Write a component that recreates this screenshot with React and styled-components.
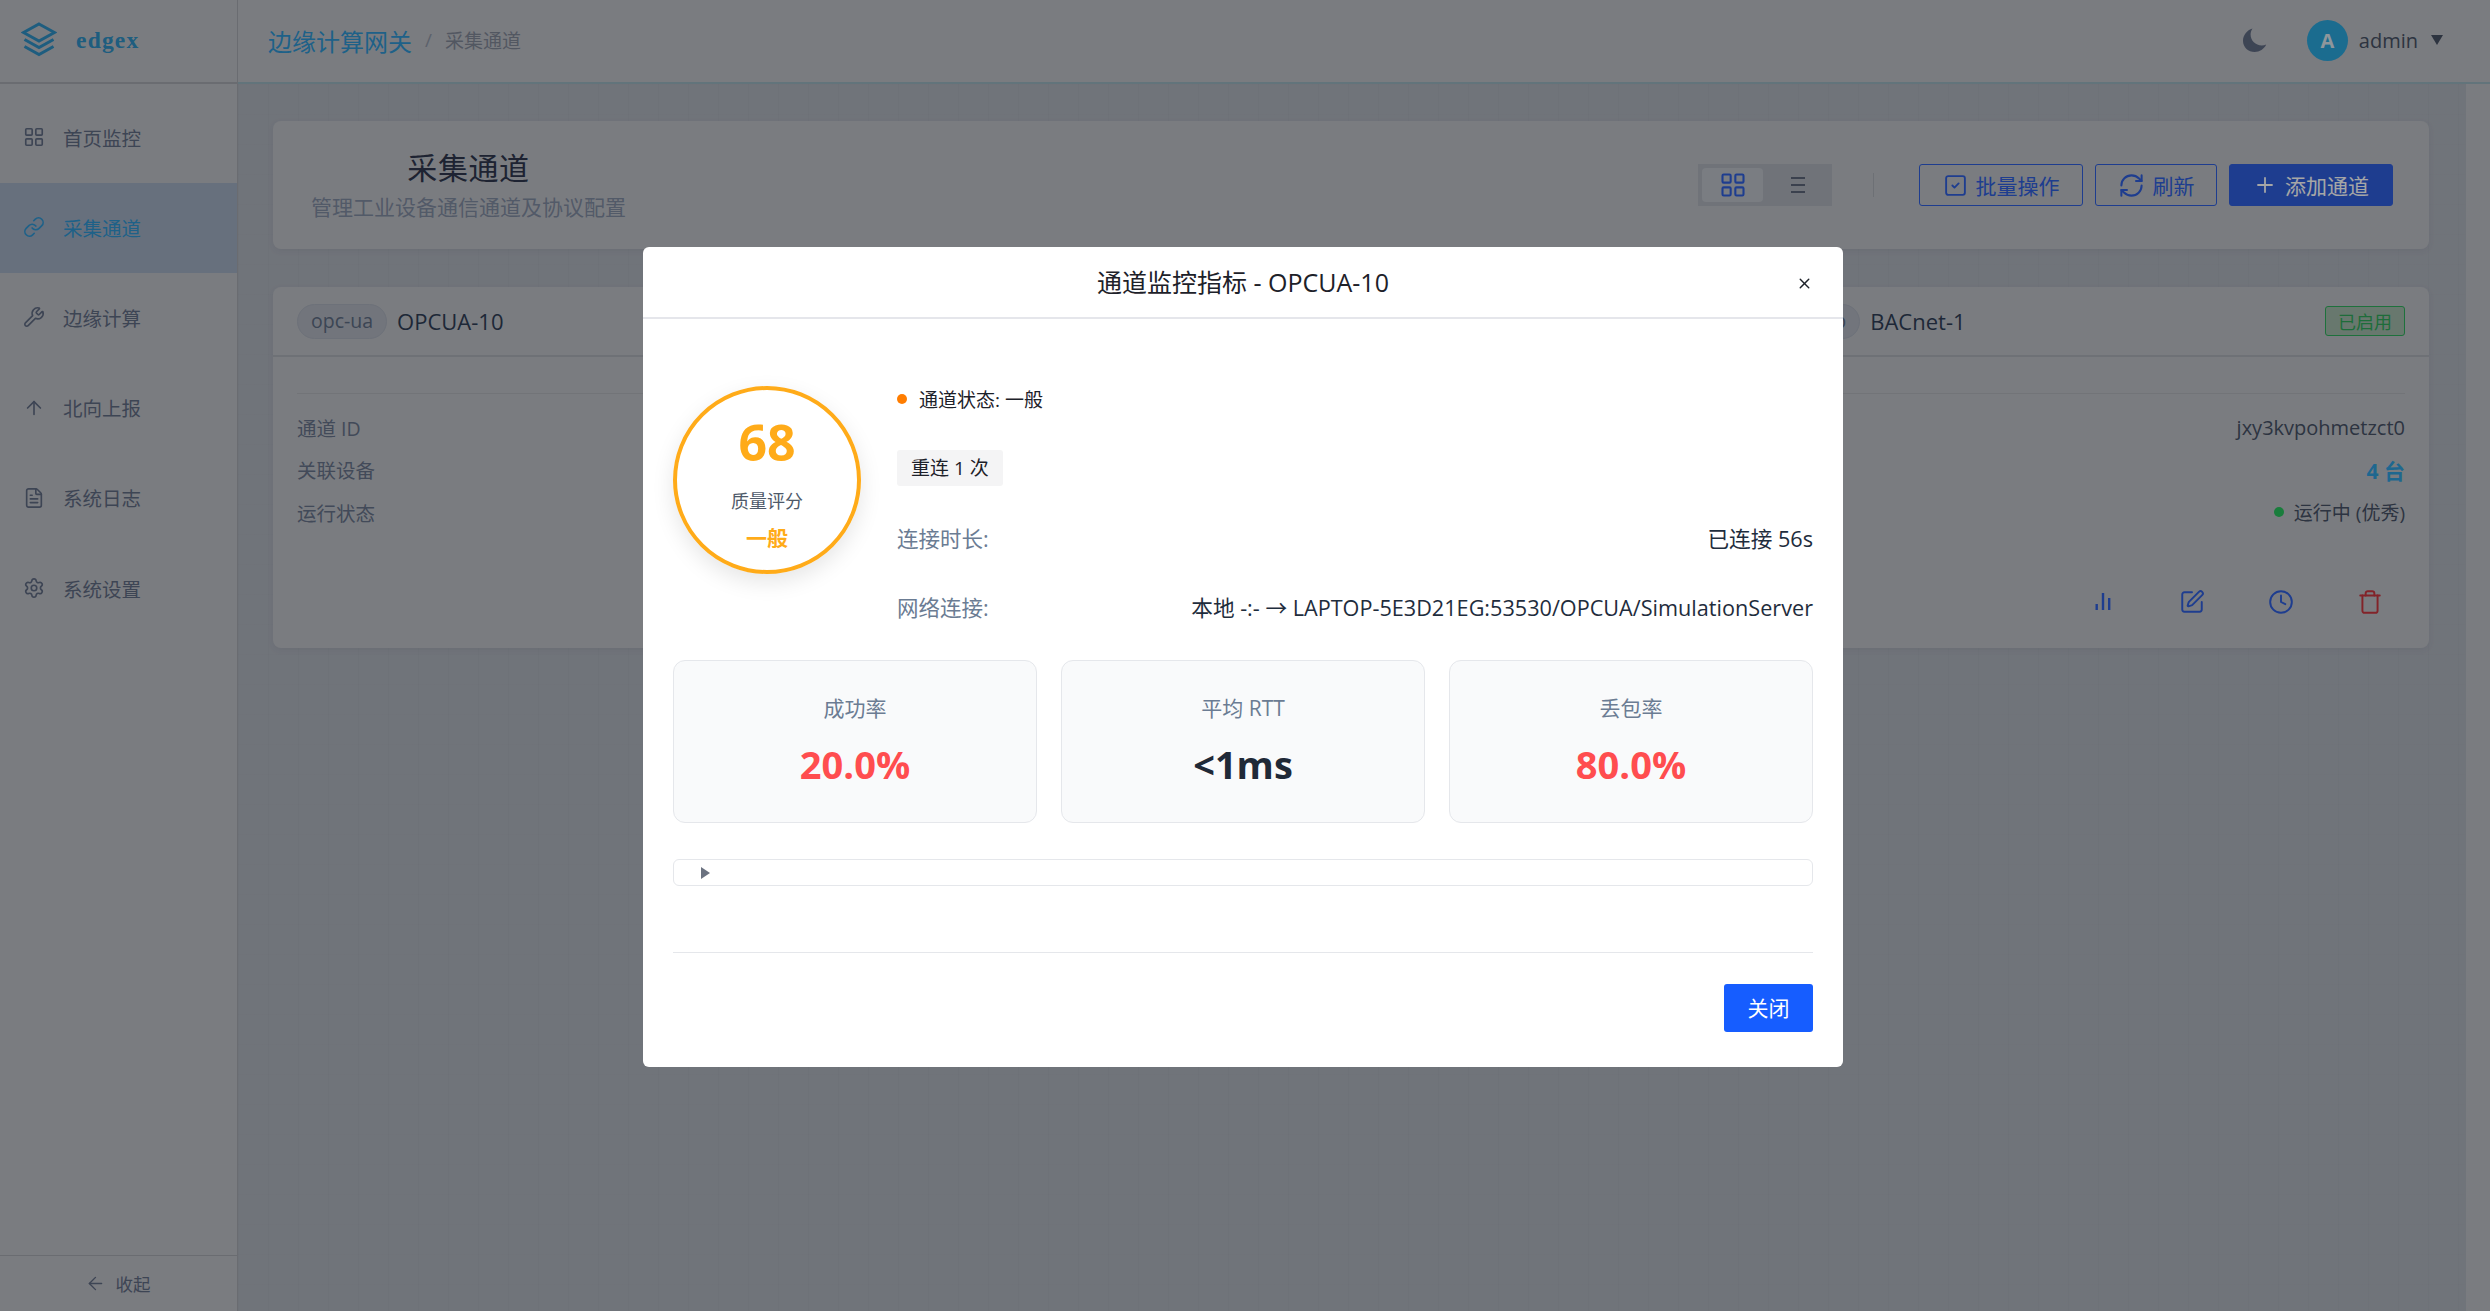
import React from 'react';
import styled, { createGlobalStyle } from 'styled-components';
import {
  ArrowLeft,
  ArrowUp,
  Clock,
  FileText,
  LayoutGrid,
  Link,
  Plus,
  RefreshCw,
  Settings,
  SquareCheck,
  SquarePen,
  Trash,
  Wrench,
  X,
} from 'lucide-react';

const SANS = '"Open Sans", "Noto Sans CJK SC", sans-serif';

const GlobalStyle = createGlobalStyle`
  html, body, #root {
    height: 100%;
    margin: 0;
  }

  body {
    overflow: hidden;
    font-family: ${SANS};
    background: #bcbfc5;
  }

  * {
    box-sizing: border-box;
  }
`;

const Shell = styled.div`
  display: flex;
  height: 100vh;
`;

const Sidebar = styled.aside`
  display: flex;
  flex-direction: column;
  flex: none;
  width: 238px;
  background: #bcbfc5;
  border-right: 1px solid #a4a7ae;
`;

const Brand = styled.div`
  display: flex;
  align-items: center;
  gap: 19px;
  flex: none;
  height: 84px;
  padding: 0 0 2px 21px;
  border-bottom: 2px solid #a4a7ae;
`;

const BrandName = styled.span`
  font-family: "Liberation Serif", serif;
  font-size: 23.5px;
  font-weight: 700;
  letter-spacing: 1.2px;
  color: #2e8fc4;
`;

const Nav = styled.nav`
  display: flex;
  flex-direction: column;
  padding-top: 9px;
`;

const NavItem = styled.div`
  display: flex;
  align-items: center;
  gap: 18px;
  height: 90.2px;
  padding: 0 0 2px 23px;
  font-size: 19.5px;
  color: ${({ $active }) => ($active ? '#2f95d2' : '#5f6a82')};
  background: ${({ $active }) => ($active ? '#9eadc0' : 'transparent')};
`;

const Collapse = styled.div`
  display: flex;
  align-items: center;
  justify-content: center;
  gap: 10px;
  height: 56px;
  margin-top: auto;
  padding-right: 2px;
  font-size: 17.5px;
  color: #5f6a82;
  border-top: 1px solid #a4a7ae;
`;

const Main = styled.main`
  display: flex;
  flex-direction: column;
  flex: 1;
  min-width: 0;
`;

const TopBar = styled.header`
  display: flex;
  align-items: center;
  justify-content: space-between;
  flex: none;
  height: 84px;
  padding: 0 47px 2px 30px;
  background: #bcbfc5;
  border-bottom: 2px solid #97b3bd;
`;

const Breadcrumb = styled.div`
  display: flex;
  align-items: center;
  font-size: 24px;
  color: #2f95d2;
`;

const Slash = styled.span`
  margin: 0 13px;
  font-size: 19px;
  color: #8e96a6;
`;

const CrumbCurrent = styled.span`
  font-size: 19px;
  color: #7f8696;
`;

const UserArea = styled.div`
  display: flex;
  align-items: center;
`;

const Avatar = styled.div`
  display: flex;
  align-items: center;
  justify-content: center;
  width: 41px;
  height: 41px;
  margin: 0 11px 0 40px;
  font-size: 20px;
  font-weight: 700;
  color: #dce7ef;
  background: #2aa6dc;
  border-radius: 50%;
`;

const UserName = styled.span`
  font-size: 20px;
  color: #465063;
`;

const Caret = styled.span`
  width: 0;
  height: 0;
  margin-left: 13px;
  border-left: 6.5px solid transparent;
  border-right: 6.5px solid transparent;
  border-top: 10px solid #465063;
`;

const Body = styled.div`
  display: flex;
  flex: 1;
  min-height: 0;
`;

const Content = styled.div`
  flex: 1;
  min-width: 0;
  padding: 37px 37px 0 35px;
  background-color: #adb2bc;
  background-image:
    linear-gradient(to right, rgba(90, 100, 120, 0.035) 1px, transparent 1px),
    linear-gradient(to bottom, rgba(90, 100, 120, 0.02) 1px, transparent 1px);
  background-size: 30px 30px;
`;

const ScrollTrack = styled.div`
  flex: none;
  width: 24px;
  background: #bcbfc5;
`;

const PageHeader = styled.section`
  display: flex;
  align-items: center;
  justify-content: space-between;
  height: 128px;
  padding: 0 36px 0 38px;
  background: #bcbfc5;
  border-radius: 8px;
  box-shadow: 0 2px 6px rgba(60, 70, 90, 0.08);
`;

const TitleBlock = styled.div`
  padding-bottom: 2px;
  text-align: center;
`;

const PageTitle = styled.h1`
  margin: 0 0 1px;
  font-size: 30px;
  font-weight: 400;
  line-height: 44px;
  letter-spacing: 0.6px;
  color: #2e364d;
`;

const PageSubtitle = styled.p`
  margin: 0;
  font-size: 21px;
  line-height: 32px;
  color: #7f8aa0;
`;

const Toolbar = styled.div`
  display: flex;
  align-items: center;
  gap: 12px;
`;

const ViewToggle = styled.div`
  display: flex;
  align-items: center;
  gap: 4px;
  width: 134px;
  height: 42px;
  padding: 0 4px;
  background: #acb1bb;
`;

const ViewOption = styled.div`
  display: flex;
  align-items: center;
  justify-content: center;
  width: 61px;
  height: 34px;
  color: ${({ $active }) => ($active ? '#2f5fdc' : '#5b6579')};
  background: ${({ $active }) => ($active ? '#bcc0c8' : 'transparent')};
  border-radius: 4px;
`;

const ToolbarDivider = styled.div`
  width: 1px;
  height: 24px;
  margin: 0 33px 0 29px;
  background: #a8acb4;
`;

const ActionButton = styled.button`
  display: inline-flex;
  align-items: center;
  justify-content: center;
  gap: 8px;
  height: 42px;
  padding: 0;
  width: ${({ $width }) => $width}px;
  font-family: ${SANS};
  font-size: 21px;
  color: ${({ $primary }) => ($primary ? '#ffffff' : '#2f5fdc')};
  background: ${({ $primary }) => ($primary ? '#2f5fdc' : 'transparent')};
  border: 1px solid #2f5fdc;
  border-radius: 3px;
`;

const CardGrid = styled.section`
  display: grid;
  grid-template-columns: repeat(3, 1fr);
  gap: 36px;
  margin-top: 38px;
`;

const Card = styled.article`
  height: 361px;
  background: #bcbfc5;
  border-radius: 8px;
  box-shadow: 0 2px 6px rgba(60, 70, 90, 0.08);
`;

const CardHeader = styled.div`
  display: flex;
  align-items: center;
  height: 70px;
  padding: 0 24px;
  border-bottom: 2px solid #a9aeb5;
`;

const TypeChip = styled.span`
  display: flex;
  align-items: center;
  height: 35px;
  padding: 0 13px 1px;
  font-size: 19.5px;
  color: #5c6b82;
  background: #afb4bf;
  border: 1px solid #a8aebb;
  border-radius: 18px;
`;

const CardName = styled.span`
  margin-left: 10px;
  font-size: 22px;
  color: #2e3d55;
`;

const EnabledTag = styled.span`
  display: flex;
  align-items: center;
  height: 30px;
  margin-left: auto;
  padding: 0 12px;
  font-size: 18px;
  color: #2fa85a;
  background: #a0b8aa;
  border: 1px solid #2fae5c;
  border-radius: 3px;
`;

const CardBody = styled.div`
  padding: 36px 24px 0;
`;

const InfoList = styled.div`
  padding-top: 12px;
  border-top: 1px solid #b0b3b9;
`;

const InfoRow = styled.div`
  display: flex;
  align-items: center;
  justify-content: space-between;
  height: 42.5px;
  font-size: 19.5px;
`;

const InfoLabel = styled.span`
  color: #667289;
`;

const InfoValue = styled.span`
  font-size: 20px;
  color: #455064;
`;

const DeviceCount = styled.span`
  font-size: 21px;
  font-weight: 700;
  color: #2f9fdc;
`;

const StatusValue = styled.span`
  display: flex;
  align-items: center;
  gap: 10px;
  font-size: 19px;
  color: #455064;
`;

const Dot = styled.span`
  width: ${({ $size }) => $size}px;
  height: ${({ $size }) => $size}px;
  background: ${({ $color }) => $color};
  border-radius: 50%;
`;

const CardActions = styled.div`
  display: flex;
  justify-content: flex-end;
  margin: 46px -9px 0 0;
`;

const IconAction = styled.span`
  display: flex;
  align-items: center;
  justify-content: center;
  width: 89px;
  height: 44px;
  color: ${({ $danger }) => ($danger ? '#c8363f' : '#2f5fdc')};
`;

const Backdrop = styled.div`
  position: fixed;
  inset: 0;
  display: flex;
  align-items: flex-start;
  justify-content: center;
  padding: 247px 4px 0 0;
  background: rgba(0, 0, 0, 0.35);
`;

const Modal = styled.div`
  display: flex;
  flex-direction: column;
  width: 1200px;
  height: 820px;
  background: #ffffff;
  border-radius: 6px;
`;

const ModalHeader = styled.div`
  position: relative;
  display: flex;
  align-items: center;
  justify-content: center;
  flex: none;
  height: 72px;
  padding-bottom: 2px;
  font-size: 25px;
  color: #1d2129;
  border-bottom: 2px solid #e5e6eb;
`;

const CloseIcon = styled(X)`
  position: absolute;
  top: 28px;
  right: 30px;
  color: #1d2129;
`;

const ModalBody = styled.div`
  display: flex;
  flex-direction: column;
  padding: 67px 30px 0;
`;

const Overview = styled.div`
  display: flex;
  gap: 36px;
`;

const ScoreRing = styled.div`
  display: flex;
  flex-direction: column;
  align-items: center;
  flex: none;
  width: 188px;
  height: 188px;
  padding-top: 22px;
  border: 4.5px solid #ffab19;
  border-radius: 50%;
  box-shadow: 0 8px 22px rgba(0, 0, 0, 0.1);
`;

const ScoreNumber = styled.div`
  font-size: 50px;
  font-weight: 700;
  line-height: 60px;
  color: #ffab19;
`;

const ScoreLabel = styled.div`
  margin-top: 16px;
  font-size: 18px;
  line-height: 26px;
  color: #4e5969;
`;

const ScoreGrade = styled.div`
  margin-top: 9px;
  font-size: 21px;
  font-weight: 700;
  line-height: 30px;
  color: #ffab19;
`;

const Details = styled.div`
  display: flex;
  flex-direction: column;
  align-items: flex-start;
  flex: 1;
  min-width: 0;
`;

const StatusLine = styled.div`
  display: flex;
  align-items: center;
  gap: 12px;
  height: 30px;
  padding-bottom: 4px;
  font-size: 19px;
  color: #1d2129;
`;

const ReconnectTag = styled.div`
  display: flex;
  align-items: center;
  height: 36px;
  margin-top: 34px;
  padding: 0 14px 2px;
  font-size: 19px;
  color: #1d2129;
  background: #f4f4f5;
  border-radius: 3px;
`;

const DetailRow = styled.div`
  display: flex;
  align-items: center;
  justify-content: space-between;
  align-self: stretch;
  height: 30px;
  margin-top: ${({ $mt }) => $mt}px;
  font-size: 21px;
`;

const DetailLabel = styled.span`
  font-size: 21.5px;
  color: #6b7c93;
`;

const DetailValue = styled.span`
  font-size: 21.65px;
  color: #1f2d3d;
`;

const Arrow = styled.span`
  font-family: "Noto Sans CJK SC", sans-serif;
`;

const Stats = styled.div`
  display: grid;
  grid-template-columns: repeat(3, 1fr);
  gap: 24px;
  margin-top: 39px;
`;

const StatCard = styled.div`
  display: flex;
  flex-direction: column;
  align-items: center;
  justify-content: center;
  gap: 16px;
  height: 163px;
  padding-bottom: 2px;
  background: #f9fafb;
  border: 1.5px solid #e5e7eb;
  border-radius: 12px;
`;

const StatLabel = styled.div`
  font-size: 21px;
  line-height: 30px;
  color: #6b7c93;
`;

const StatValue = styled.div`
  font-size: 38px;
  font-weight: 700;
  line-height: 50px;
  color: ${({ $alert }) => ($alert ? '#ff4d4f' : '#1f2937')};
`;

const Disclosure = styled.div`
  display: flex;
  align-items: center;
  height: 27px;
  margin-top: 36px;
  padding-left: 27px;
  border: 1.5px solid #e5e7eb;
  border-radius: 6px;
`;

const Triangle = styled.span`
  width: 0;
  height: 0;
  border-top: 6px solid transparent;
  border-bottom: 6px solid transparent;
  border-left: 9px solid #6b7280;
`;

const ModalFooter = styled.div`
  display: flex;
  justify-content: flex-end;
  margin-top: 66px;
  padding-top: 31px;
  border-top: 1.5px solid #e5e7eb;
`;

const CloseButton = styled.button`
  width: 89px;
  height: 48px;
  padding: 0 0 2px;
  font-family: ${SANS};
  font-size: 21px;
  color: #ffffff;
  background: #165dff;
  border: 0;
  border-radius: 3px;
`;

const LogoMark = () => (
  <svg width="36" height="36" viewBox="0 0 36 36" fill="none" stroke="#2e8fc4" strokeWidth="3">
    <path d="M18 2 33.5 10.5 18 19 2.5 10.5Z" />
    <path d="M3.5 17.5 18 25.5 32.5 17.5" />
    <path d="M3.5 24.5 18 32.5 32.5 24.5" />
  </svg>
);

const MoonIcon = () => (
  <svg width="24" height="24" viewBox="0 0 24 24" fill="#5f6a82">
    <path d="M9.5 0.5C3.9 2.2 0 7.2 0 12.8 0 19.6 5.4 24 11.6 24c5 0 9.6-2.8 11.6-7.4-1.4.6-2.9.9-4.4.9C12.6 17.5 7.6 12.8 7.6 6.6c0-2.2.6-4.3 1.9-6.1Z" />
  </svg>
);

const ListIcon = () => (
  <svg width="14" height="16" viewBox="0 0 14 16" fill="none" stroke="currentColor" strokeWidth="2">
    <path d="M0 1h14M0 8h14M0 15h14" />
  </svg>
);

const BarsIcon = () => (
  <svg width="16" height="17" viewBox="0 0 16 17" fill="currentColor">
    <rect x="0.5" y="11" width="2.4" height="6" />
    <rect x="6.8" y="0" width="2.4" height="17" />
    <rect x="13" y="5" width="2.4" height="12" />
  </svg>
);

const navItems = [
  { label: '首页监控', icon: LayoutGrid },
  { label: '采集通道', icon: Link, active: true },
  { label: '边缘计算', icon: Wrench },
  { label: '北向上报', icon: ArrowUp },
  { label: '系统日志', icon: FileText },
  { label: '系统设置', icon: Settings },
];

const stats = [
  { label: '成功率', value: '20.0%', alert: true },
  { label: '平均 RTT', value: '<1ms' },
  { label: '丢包率', value: '80.0%', alert: true },
];

const App = () => (
  <>
    <GlobalStyle />
    <Shell>
      <Sidebar>
        <Brand>
          <LogoMark />
          <BrandName>edgex</BrandName>
        </Brand>
        <Nav>
          {navItems.map(({ label, icon: Icon, active }) => (
            <NavItem key={label} $active={active}>
              <Icon size={22} strokeWidth={1.8} />
              {label}
            </NavItem>
          ))}
        </Nav>
        <Collapse>
          <ArrowLeft size={21} strokeWidth={1.6} />
          收起
        </Collapse>
      </Sidebar>
      <Main>
        <TopBar>
          <Breadcrumb>
            边缘计算网关
            <Slash>/</Slash>
            <CrumbCurrent>采集通道</CrumbCurrent>
          </Breadcrumb>
          <UserArea>
            <MoonIcon />
            <Avatar>A</Avatar>
            <UserName>admin</UserName>
            <Caret />
          </UserArea>
        </TopBar>
        <Body>
          <Content>
            <PageHeader>
              <TitleBlock>
                <PageTitle>采集通道</PageTitle>
                <PageSubtitle>管理工业设备通信通道及协议配置</PageSubtitle>
              </TitleBlock>
              <Toolbar>
                <ViewToggle>
                  <ViewOption $active>
                    <LayoutGrid size={28} strokeWidth={1.8} />
                  </ViewOption>
                  <ViewOption>
                    <ListIcon />
                  </ViewOption>
                </ViewToggle>
                <ToolbarDivider />
                <ActionButton $width={164}>
                  <SquareCheck size={25} strokeWidth={1.8} />
                  批量操作
                </ActionButton>
                <ActionButton $width={122}>
                  <RefreshCw size={27} strokeWidth={1.8} />
                  刷新
                </ActionButton>
                <ActionButton $width={164} $primary>
                  <Plus size={24} strokeWidth={1.8} />
                  添加通道
                </ActionButton>
              </Toolbar>
            </PageHeader>
            <CardGrid>
              <Card>
                <CardHeader>
                  <TypeChip>opc-ua</TypeChip>
                  <CardName>OPCUA-10</CardName>
                </CardHeader>
                <CardBody>
                  <InfoList>
                    <InfoRow>
                      <InfoLabel>通道 ID</InfoLabel>
                    </InfoRow>
                    <InfoRow>
                      <InfoLabel>关联设备</InfoLabel>
                    </InfoRow>
                    <InfoRow>
                      <InfoLabel>运行状态</InfoLabel>
                    </InfoRow>
                  </InfoList>
                </CardBody>
              </Card>
              <Card />
              <Card>
                <CardHeader>
                  <TypeChip>bacnetp</TypeChip>
                  <CardName>BACnet-1</CardName>
                  <EnabledTag>已启用</EnabledTag>
                </CardHeader>
                <CardBody>
                  <InfoList>
                    <InfoRow>
                      <InfoLabel>通道 ID</InfoLabel>
                      <InfoValue>jxy3kvpohmetzct0</InfoValue>
                    </InfoRow>
                    <InfoRow>
                      <InfoLabel>关联设备</InfoLabel>
                      <DeviceCount>4 台</DeviceCount>
                    </InfoRow>
                    <InfoRow>
                      <InfoLabel>运行状态</InfoLabel>
                      <StatusValue>
                        <Dot $size={10} $color="#27c05c" />
                        运行中 (优秀)
                      </StatusValue>
                    </InfoRow>
                  </InfoList>
                  <CardActions>
                    <IconAction>
                      <BarsIcon />
                    </IconAction>
                    <IconAction>
                      <SquarePen size={26} strokeWidth={1.8} />
                    </IconAction>
                    <IconAction>
                      <Clock size={26} strokeWidth={1.8} />
                    </IconAction>
                    <IconAction $danger>
                      <Trash size={26} strokeWidth={1.8} />
                    </IconAction>
                  </CardActions>
                </CardBody>
              </Card>
            </CardGrid>
          </Content>
          <ScrollTrack />
        </Body>
      </Main>
    </Shell>
    <Backdrop>
      <Modal>
        <ModalHeader>
          通道监控指标 - OPCUA-10
          <CloseIcon size={17} strokeWidth={2} />
        </ModalHeader>
        <ModalBody>
          <Overview>
            <ScoreRing>
              <ScoreNumber>68</ScoreNumber>
              <ScoreLabel>质量评分</ScoreLabel>
              <ScoreGrade>一般</ScoreGrade>
            </ScoreRing>
            <Details>
              <StatusLine>
                <Dot $size={10} $color="#ff7d00" />
                通道状态: 一般
              </StatusLine>
              <ReconnectTag>重连 1 次</ReconnectTag>
              <DetailRow $mt={36}>
                <DetailLabel>连接时长:</DetailLabel>
                <DetailValue>已连接 56s</DetailValue>
              </DetailRow>
              <DetailRow $mt={39}>
                <DetailLabel>网络连接:</DetailLabel>
                <DetailValue>
                  本地 -:- <Arrow>→</Arrow> LAPTOP-5E3D21EG:53530/OPCUA/SimulationServer
                </DetailValue>
              </DetailRow>
            </Details>
          </Overview>
          <Stats>
            {stats.map(({ label, value, alert }) => (
              <StatCard key={label}>
                <StatLabel>{label}</StatLabel>
                <StatValue $alert={alert}>{value}</StatValue>
              </StatCard>
            ))}
          </Stats>
          <Disclosure>
            <Triangle />
          </Disclosure>
          <ModalFooter>
            <CloseButton>关闭</CloseButton>
          </ModalFooter>
        </ModalBody>
      </Modal>
    </Backdrop>
  </>
);

export default App;
